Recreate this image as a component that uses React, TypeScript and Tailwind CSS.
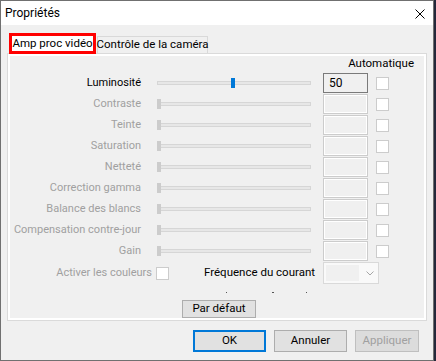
import React from 'react'

const font = { fontFamily: 'Roboto, "Noto Sans", sans-serif' }

const rows = [
  { label: 'Luminosité', value: '50', enabled: true, pos: 74 },
  { label: 'Contraste' },
  { label: 'Teinte' },
  { label: 'Saturation' },
  { label: 'Netteté' },
  { label: 'Correction gamma' },
  { label: 'Balance des blancs' },
  { label: 'Compensation contre-jour' },
  { label: 'Gain' },
] as { label: string; value?: string; enabled?: boolean; pos?: number }[]

function Slider({ enabled, pos }: { enabled?: boolean; pos?: number }) {
  return (
    <div className="relative ml-[16px] w-[154px] h-[10px] flex items-center">
      <div className="w-full h-[4px] border border-[#d6d6d6] bg-[#e7e7e7]" />
      <div
        className={
          'absolute top-0 w-[4px] h-[10px] ' + (enabled ? 'bg-[#0078d7]' : 'bg-[#cccccc]')
        }
        style={{ left: pos ?? 0 }}
      />
    </div>
  )
}

function Row({ label, value, enabled, pos }: { label: string; value?: string; enabled?: boolean; pos?: number }) {
  return (
    <div className="flex items-center h-[20px]">
      <div
        className={
          'w-[131px] flex justify-end leading-none -mt-[2px] ' +
          (enabled ? 'text-black' : 'text-[#a0a0a0]')
        }
      >
        {label}
      </div>
      <Slider enabled={enabled} pos={pos} />
      <div
        className={
          'ml-[12px] w-[45px] h-[20px] flex items-center pl-[5px] text-[12px] bg-[#f0f0f0] border ' +
          (enabled ? 'border-[#7a7a7a]' : 'border-[#cccccc] shadow-[inset_0_0_0_1px_#ffffff]')
        }
      >
        {value}
      </div>
      <div className="ml-[8px] w-[13px] h-[13px] bg-white border border-[#cccccc]" />
    </div>
  )
}

export default function App() {
  return (
    <div className="w-[436px] h-[361px] bg-[#24283a] select-none text-[11px] whitespace-nowrap" style={font}>
      <div className="w-[434px] h-[361px] border border-[#707070] bg-[#f0f0f0] flex flex-col">
        {/* title bar */}
        <div className="h-[24px] bg-white flex items-center justify-between pl-[4px] pr-[8px]">
          <span className="text-black text-[12px]">Propriétés</span>
          <svg width="10" height="10" viewBox="0 0 10 10" className="mt-[2px]">
            <path d="M0.5 0.5 L9.5 9.5 M9.5 0.5 L0.5 9.5" stroke="#000" strokeWidth="1" />
          </svg>
        </div>

        {/* tabs */}
        <div className="mt-[8px] flex items-end pl-[8px] h-[20px] relative z-10">
          <div className="h-[21px] w-[87px] border-[3px] border-[#ff0000] bg-white flex items-center justify-center text-black text-[11.5px] -mb-[1px]">
            Amp proc vidéo
          </div>
          <div className="h-[17px] w-[111px] ml-[1px] border border-b-0 border-[#d9d9d9] bg-[#f0f0f0] flex items-center justify-center text-black text-[11.5px]">
            Contrôle de la caméra
          </div>
        </div>

        {/* panel */}
        <div className="ml-[6px] w-[420px] h-[268px] border border-[#dadada]">
          <div className="h-full border-2 border-white flex flex-col">
            <div className="h-[17px] flex justify-end pr-[10px] leading-[14px] text-black text-[11.5px]">
              Automatique
            </div>
            <div className="flex flex-col gap-[1px]">
              {rows.map(r => (
                <Row key={r.label} {...r} />
              ))}
            </div>
            <div className="mt-[1px] h-[22px] flex items-center">
              <div className="w-[142px] flex justify-end text-[#a0a0a0]">
                Activer les couleurs
              </div>
              <div className="ml-[4px] w-[13px] h-[13px] bg-white border border-[#cccccc]" />
              <div className="ml-[35px] w-[119px] text-black text-[11.5px]">
                Fréquence du courant
              </div>
              <div className="w-[56px] h-[22px] border border-[#d9d9d9] bg-[#f9f9f9] flex items-center pl-[2px] pr-[4px] justify-between">
                <div className="w-[33px] h-[16px] bg-[#f0f0f0]" />
                <svg width="8" height="5" viewBox="0 0 8 5">
                  <path d="M0.5 0.5 L4 4 L7.5 0.5" fill="none" stroke="#a6a6a6" strokeWidth="1" />
                </svg>
              </div>
            </div>
            <div className="h-[16px] relative">
              <span className="absolute left-[216px] top-[8px] w-[1px] h-[1px] bg-[#555]" />
              <span className="absolute left-[262px] top-[8px] w-[2px] h-[1px] bg-[#555]" />
              <span className="absolute left-[296px] top-[8px] w-[1px] h-[1px] bg-[#555]" />
            </div>
            <div className="ml-[172px] w-[74px] h-[18px] bg-[#e1e1e1] border border-[#adadad] flex items-center justify-center text-black text-[11.5px]">
              Par défaut
            </div>
          </div>
        </div>

        {/* buttons */}
        <div className="mt-[9px] flex pl-[192px] gap-[8px] text-[11.5px]">
          <button className="w-[73px] h-[22px] bg-[#e1e1e1] border-2 border-[#0078d7] text-black">
            OK
          </button>
          <button className="w-[73px] h-[22px] bg-[#e1e1e1] border border-[#adadad] text-black">
            Annuler
          </button>
          <button className="w-[64px] h-[22px] bg-[#dcdcdc] border border-[#bfbfbf] text-[#a0a0a0]">
            Appliquer
          </button>
        </div>
      </div>
    </div>
  )
}
